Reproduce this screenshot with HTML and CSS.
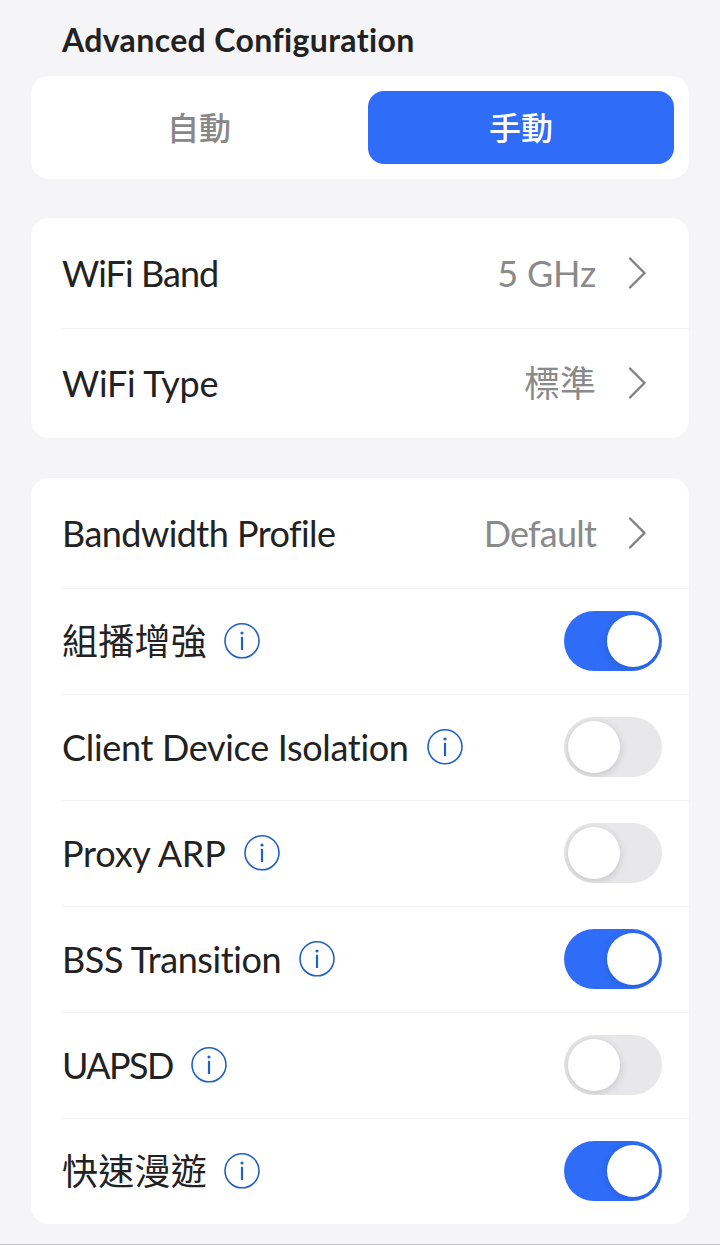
FILE: index.html
```html
<!DOCTYPE html>
<html lang="zh-Hant">
    <head>
        <meta charset="UTF-8" />
        <meta name="viewport" content="width=device-width, initial-scale=1.0" />
        <title>Advanced Configuration</title>
        <link rel="stylesheet" href="styles.css">
    </head>
    <body>
        <svg class="sprite">
            <symbol id="icon-arrow" viewBox="0 0 20 34">
                <path d="M3 2.5 L17.5 17 L3 31.5" />
            </symbol>
            <symbol id="icon-info" viewBox="0 0 36 36">
                <circle cx="18" cy="17.8" r="17" />
                <path class="stem" d="M18 13.8 V27" />
                <circle class="dot" cx="18" cy="10" r="1.6" />
            </symbol>
        </svg>

        <div class="container">
            <h1>Advanced Configuration</h1>

            <div class="card tabs">
                <button class="tab">自動</button>
                <button class="tab active">手動</button>
            </div>

            <div class="card">
                <div class="row tall">
                    <span class="name band">WiFi Band</span>
                    <span class="value ghz">5 GHz</span>
                    <svg class="arrow"><use href="#icon-arrow" /></svg>
                </div>
                <div class="row tall">
                    <span class="name type">WiFi Type</span>
                    <span class="value">標準</span>
                    <svg class="arrow"><use href="#icon-arrow" /></svg>
                </div>
            </div>

            <div class="card">
                <div class="row tall">
                    <span class="name profile">Bandwidth Profile</span>
                    <span class="value default">Default</span>
                    <svg class="arrow"><use href="#icon-arrow" /></svg>
                </div>
                <div class="row">
                    <span class="name cjk">組播增強</span>
                    <svg class="info"><use href="#icon-info" /></svg>
                    <span class="switch on"></span>
                </div>
                <div class="row">
                    <span class="name isolation">Client Device Isolation</span>
                    <svg class="info"><use href="#icon-info" /></svg>
                    <span class="switch"></span>
                </div>
                <div class="row">
                    <span class="name proxy">Proxy ARP</span>
                    <svg class="info"><use href="#icon-info" /></svg>
                    <span class="switch"></span>
                </div>
                <div class="row">
                    <span class="name bss">BSS Transition</span>
                    <svg class="info"><use href="#icon-info" /></svg>
                    <span class="switch on"></span>
                </div>
                <div class="row">
                    <span class="name uapsd">UAPSD</span>
                    <svg class="info"><use href="#icon-info" /></svg>
                    <span class="switch"></span>
                </div>
                <div class="row">
                    <span class="name cjk">快速漫遊</span>
                    <svg class="info"><use href="#icon-info" /></svg>
                    <span class="switch on"></span>
                </div>
            </div>
        </div>
    </body>
</html>
```
FILE: styles.css
```css
* {
    box-sizing: border-box;
}

body {
    margin: 0;
    background-color: #f5f5f8;
    color: #222;
    font-family: Lato, "Noto Sans CJK TC", sans-serif;
    font-variant-ligatures: none;
}

.sprite {
    display: none;
}

.container {
    height: 1245px;
    padding: 20px 31px 0;
    border-bottom: 1px solid #c6c6c8;
}

h1 {
    height: 56px;
    margin: 0;
    padding-left: 31px;
    font-size: 32px;
    line-height: 40px;
    font-weight: 700;
    letter-spacing: 0.36px;
    white-space: nowrap;
}

.card {
    margin-bottom: 39px;
    padding-left: 31px;
    border-radius: 18px;
    background-color: #fff;
}

.card + .card + .card {
    margin-top: 40px;
}

.tabs {
    display: flex;
    gap: 16px;
    height: 103px;
    padding: 15px;
}

.tab {
    flex: 1;
    border: none;
    border-radius: 16px;
    padding: 0 0 3px;
    background: none;
    color: #888;
    font-family: inherit;
    font-size: 32px;
    font-weight: 500;
}

.tab.active {
    background-color: #2f6df8;
    color: #fff;
}

.row {
    display: flex;
    align-items: center;
    height: 106px;
    padding-right: 27px;
    padding-bottom: 1px;
    border-top: 1px solid #f3f3f4;
}

.row.tall {
    height: 110px;
    padding-right: 42px;
}

.row:first-child {
    border-top: none;
}

.name {
    font-size: 36px;
    line-height: 52px;
    white-space: nowrap;
}

.cjk {
    letter-spacing: 0.25px;
    margin-right: -1px;
}

.band {
    letter-spacing: -0.95px;
}

.type {
    letter-spacing: -0.25px;
}

.profile {
    letter-spacing: -0.55px;
}

.isolation {
    letter-spacing: -0.32px;
}

.proxy {
    letter-spacing: -0.2px;
}

.bss {
    letter-spacing: -0.4px;
}

.uapsd {
    letter-spacing: -1.6px;
}

.value {
    margin-left: auto;
    color: #8a8a8a;
    font-size: 36px;
    line-height: 52px;
}

.ghz {
    letter-spacing: -0.2px;
}

.default {
    letter-spacing: -0.8px;
}

.arrow {
    width: 20px;
    height: 34px;
    margin-left: 31px;
    fill: none;
    stroke: #808086;
    stroke-width: 2.4;
    stroke-linecap: round;
    stroke-linejoin: round;
}

.info {
    width: 36px;
    height: 36px;
    margin-left: 18px;
    fill: none;
    stroke: #2160c4;
    stroke-width: 1.6;
}

.stem {
    stroke-width: 2.2;
}

.dot {
    fill: #2160c4;
    stroke: none;
}

.switch {
    display: flex;
    width: 98px;
    height: 60px;
    margin-left: auto;
    padding: 4px 3px 4px 4px;
    border-radius: 30px;
    background-color: #e8e8ea;
    overflow: hidden;
}

.switch::before {
    content: "";
    width: 52px;
    height: 52px;
    border-radius: 50%;
    background-color: #fff;
    box-shadow: 0 2px 8px rgba(0, 0, 0, 0.16);
}

.switch.on {
    justify-content: flex-end;
    background-color: #2f6df8;
}
```
